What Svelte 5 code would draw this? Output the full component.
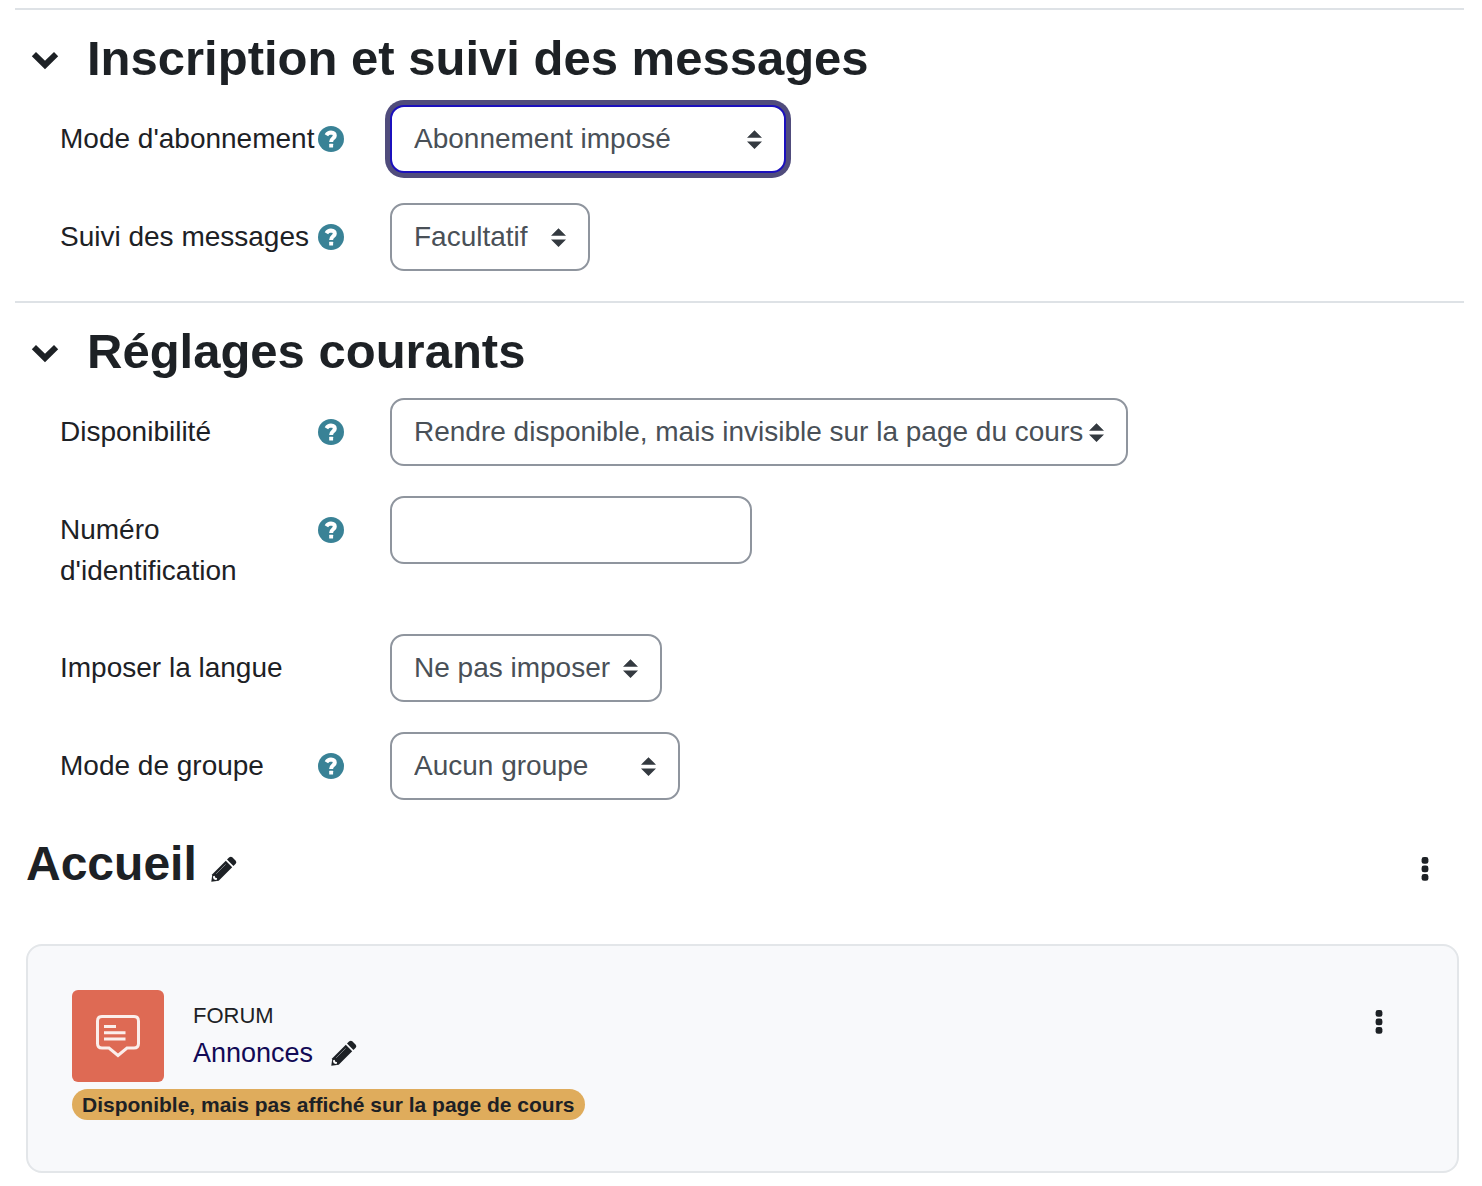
<script lang="ts">
	interface Field {
		id: string;
		label: string;
		help: boolean;
		size: string;
		options?: string[];
	}

	interface Section {
		id: string;
		title: string;
		fields: Field[];
	}

	const sections: Section[] = [
		{
			id: "subscription",
			title: "Inscription et suivi des messages",
			fields: [
				{
					id: "subscribe-mode",
					label: "Mode d'abonnement",
					help: true,
					size: "lg",
					options: ["Abonnement imposé", "Abonnement facultatif", "Abonnement automatique", "Abonnement désactivé"],
				},
				{
					id: "tracking",
					label: "Suivi des messages",
					help: true,
					size: "xs",
					options: ["Facultatif", "Désactivé"],
				},
			],
		},
		{
			id: "common",
			title: "Réglages courants",
			fields: [
				{
					id: "visibility",
					label: "Disponibilité",
					help: true,
					size: "xl",
					options: [
						"Rendre disponible, mais invisible sur la page du cours",
						"Afficher sur la page du cours",
						"Cacher sur la page du cours",
					],
				},
				{ id: "id-number", label: "Numéro d'identification", help: true, size: "text" },
				{
					id: "language",
					label: "Imposer la langue",
					help: false,
					size: "sm",
					options: ["Ne pas imposer", "Français", "English"],
				},
				{
					id: "group-mode",
					label: "Mode de groupe",
					help: true,
					size: "md",
					options: ["Aucun groupe", "Groupes séparés", "Groupes visibles"],
				},
			],
		},
	];

	let open: Record<string, boolean> = $state({ subscription: true, common: true });
	let active = $state("subscribe-mode");
</script>

{#snippet pencil()}
	<svg class="pencil" viewBox="0 0 26 26" aria-hidden="true">
		<path d="M0.300 25.700L1.300 18.300L14.800 4.800L21.200 11.200L7.700 24.700Z" />
		<path d="M16 3.600L18.300 1.300Q19.800 0 21.300 1.300L24.700 4.700Q26 6.200 24.700 7.700L22.400 10Z" />
		<path class="shine" d="M5.200 17.800L14.600 8.400" />
		<path class="tip" d="M2.700 20.200L3.500 22.500L5.800 23.300" />
	</svg>
{/snippet}

{#snippet dots()}
	<svg class="dots" viewBox="0 0 8 26" aria-hidden="true">
		<rect x="0.6" y="1" width="6.8" height="6.8" rx="2.4" />
		<rect x="0.6" y="9.5" width="6.8" height="6.8" rx="2.4" />
		<rect x="0.6" y="18" width="6.8" height="6.8" rx="2.4" />
	</svg>
{/snippet}

<main>
	<form onsubmit={(e) => e.preventDefault()}>
		{#each sections as section (section.id)}
			<section class="fieldset">
				<div class="fieldset-head">
					<button
						type="button"
						class="toggle"
						class:closed={!open[section.id]}
						aria-expanded={open[section.id]}
						aria-label={section.title}
						onclick={() => (open[section.id] = !open[section.id])}
					>
						<svg viewBox="0 0 28 20" aria-hidden="true">
							<path d="M2.900 4.200L14 15L25.100 4.200" />
						</svg>
					</button>
					<h2>{section.title}</h2>
				</div>

				{#if open[section.id]}
					<div class="fields">
						{#each section.fields as field (field.id)}
							<div class="field">
								<div class="field-label">
									<label for={field.id}>{field.label}</label>
									{#if field.help}
										<button type="button" class="help" aria-label="Aide sur {field.label}">
											<svg viewBox="0 0 26 26" aria-hidden="true">
												<circle cx="13" cy="13" r="13" />
												<path class="hook" d="M8.400 9.200Q10 6.600 12.900 6.600Q16.800 6.800 16.800 9.700C16.800 12.300 13.100 12.300 13.100 15.900" />
												<rect class="point" x="11.200" y="17.800" width="3.900" height="3.700" rx="0.500" />
											</svg>
										</button>
									{/if}
								</div>
								{#if field.options}
									<select
										id={field.id}
										class="control {field.size}"
										class:active={active === field.id}
										onfocus={() => (active = field.id)}
									>
										{#each field.options as option}
											<option>{option}</option>
										{/each}
									</select>
								{:else}
									<input
										type="text"
										id={field.id}
										class="control {field.size}"
										class:active={active === field.id}
										onfocus={() => (active = field.id)}
									/>
								{/if}
							</div>
						{/each}
					</div>
				{/if}
			</section>
		{/each}
	</form>

	<section class="course">
		<header class="course-head">
			<h2>Accueil</h2>
			<button type="button" class="icon-btn edit" aria-label="Modifier le nom de la section">
				{@render pencil()}
			</button>
			<button type="button" class="icon-btn menu" aria-label="Menu de la section">
				{@render dots()}
			</button>
		</header>

		<article class="activity">
			<div class="activity-main">
				<div class="activity-icon">
					<svg viewBox="0 0 46 44" aria-hidden="true">
						<path
							class="bubble"
							d="M7 2.5H39Q43.500 2.500 43.500 7V29.500Q43.500 34 39 34H32L23 41.500L14 34H7Q2.500 34 2.500 29.500V7Q2.500 2.500 7 2.500Z"
						/>
						<path class="lines" d="M9 12.500H21M9 18.700H30.500M9 24.900H30.500" />
					</svg>
				</div>
				<div class="activity-text">
					<span class="kind">FORUM</span>
					<div class="name">
						<a href="#annonces">Annonces</a>
						<button type="button" class="icon-btn" aria-label="Modifier le titre">
							{@render pencil()}
						</button>
					</div>
				</div>
				<button type="button" class="icon-btn menu" aria-label="Menu de l'activité">
					{@render dots()}
				</button>
			</div>
			<span class="badge">Disponible, mais pas affiché sur la page de cours</span>
		</article>
	</section>
</main>

<style>
	:global(body) {
		margin: 0;
		background-color: #fff;
	}

	main {
		padding: 8px 18px 14px 15px;
		font-family: "Liberation Sans", Arial, sans-serif;
		font-size: 27px;
		line-height: 41px;
		color: #1d2125;
	}

	h2 {
		margin: 0;
		font-size: 48px;
		line-height: 56px;
		font-weight: 700;
	}

	button {
		padding: 0;
		border: none;
		background: none;
		color: inherit;
		cursor: pointer;
	}

	svg {
		display: block;
		fill: currentColor;
	}

	.fieldset {
		padding: 20px 0 30px;
		border-top: 2px solid #dee2e6;
	}

	.fieldset-head {
		display: flex;
		align-items: center;
		gap: 28px;
		padding-left: 16px;
	}

	.fieldset-head h2 {
		font-size: 49px;
	}

	.toggle {
		padding-top: 3px;
	}

	.toggle svg {
		width: 28px;
		height: 20px;
		fill: none;
		stroke: currentColor;
		stroke-width: 6;
	}

	.toggle.closed svg {
		transform: rotate(-90deg);
	}

	.fields {
		display: flex;
		flex-direction: column;
		gap: 30px;
		padding: 19px 0 0 45px;
	}

	.field {
		display: flex;
		align-items: flex-start;
		gap: 46px;
	}

	.field-label {
		display: flex;
		justify-content: space-between;
		flex: none;
		width: 284px;
		box-sizing: border-box;
		padding: 13px 0;
		font-size: 28px;
	}

	.help {
		height: 41px;
		color: #398296;
	}

	.help svg {
		width: 26px;
		height: 26px;
	}

	.hook {
		fill: none;
		stroke: #fff;
		stroke-width: 4;
	}

	.point {
		fill: #fff;
	}

	.control {
		box-sizing: border-box;
		height: 68px;
		max-width: 100%;
		padding: 0 40px 2px 22px;
		border: 2px solid #8f959e;
		border-radius: 14px;
		background-color: #fff;
		color: #495057;
		font-family: inherit;
		font-size: 28px;
		outline: none;
	}

	select.control {
		appearance: none;
		background-image: url("data:image/svg+xml,%3Csvg xmlns='http://www.w3.org/2000/svg' viewBox='0 0 4 5'%3E%3Cpath fill='%23343a40' d='M2 0L0 2h4zm0 5L0 3h4z'/%3E%3C/svg%3E");
		background-repeat: no-repeat;
		background-position: right 22px center;
		background-size: 15px 19px;
	}

	.control.active {
		border-color: #1b10bd;
		box-shadow: 0 0 0 5px #504c7c;
	}

	.xs {
		width: 200px;
	}

	.sm {
		width: 272px;
	}

	.md {
		width: 290px;
	}

	.text {
		width: 362px;
	}

	.lg {
		width: 396px;
	}

	.xl {
		width: 738px;
	}

	.course-head {
		display: flex;
		align-items: center;
		padding: 6px 35px 52px 11px;
	}

	.edit {
		margin-left: 14px;
	}

	.course-head .icon-btn {
		padding-top: 10px;
	}

	.pencil {
		width: 26px;
		height: 26px;
	}

	.shine {
		fill: none;
		stroke: #777b80;
		stroke-width: 1;
	}

	.tip {
		fill: none;
		stroke: #fff;
		stroke-width: 2;
	}

	.dots {
		width: 8px;
		height: 26px;
	}

	.menu {
		margin-left: auto;
	}

	.activity {
		margin: 0 5px 0 11px;
		padding: 44px 74px 51px 44px;
		border: 2px solid #e3e6e9;
		border-radius: 16px;
		background-color: #f8f9fb;
	}

	.activity-main {
		display: flex;
		align-items: center;
		gap: 29px;
	}

	.activity-icon {
		display: flex;
		align-items: center;
		justify-content: center;
		width: 92px;
		height: 92px;
		border-radius: 6px;
		background-color: #de6a54;
	}

	.activity-icon svg {
		width: 46px;
		height: 44px;
		fill: none;
		stroke: #fbeeeb;
		stroke-width: 3;
	}

	.activity-text {
		display: flex;
		flex-direction: column;
	}

	.kind {
		font-size: 22px;
		line-height: 34px;
	}

	.name {
		display: flex;
		align-items: center;
		gap: 18px;
	}

	.name a {
		color: #120a56;
		text-decoration: none;
	}

	.activity .menu {
		align-self: flex-start;
		margin-top: 19px;
	}

	.badge {
		display: table;
		margin-top: 7px;
		padding: 0 10px;
		border-radius: 16px;
		background-color: #dfac5c;
		font-size: 21px;
		line-height: 31px;
		font-weight: 700;
	}
</style>
